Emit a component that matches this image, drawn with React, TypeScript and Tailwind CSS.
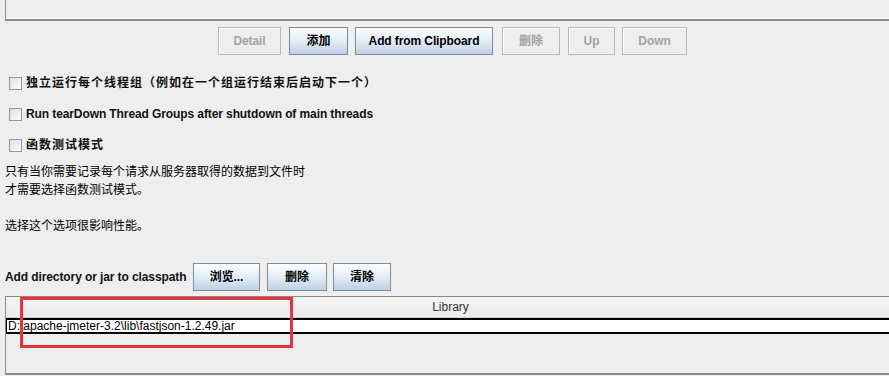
import React from 'react';

const font = 'font-["Liberation_Sans","Noto_Sans_CJK_SC",sans-serif]';

type Btn = { label: string; w: string; ml: string; disabled?: boolean };

const topButtons: Btn[] = [
  { label: 'Detail', w: 'w-[63px]', ml: 'ml-[218px]', disabled: true },
  { label: '添加', w: 'w-[59px]', ml: 'ml-[8px]' },
  { label: 'Add from Clipboard', w: 'w-[138px]', ml: 'ml-[7px]' },
  { label: '删除', w: 'w-[58px]', ml: 'ml-[9px]', disabled: true },
  { label: 'Up', w: 'w-[47px]', ml: 'ml-[8px]', disabled: true },
  { label: 'Down', w: 'w-[65px]', ml: 'ml-[7px]', disabled: true },
];

const classpathButtons: Btn[] = [
  { label: '浏览...', w: 'w-[67px]', ml: 'ml-[7px]' },
  { label: '删除', w: 'w-[60px]', ml: 'ml-[7px]' },
  { label: '清除', w: 'w-[58px]', ml: 'ml-[6px]' },
];

const SwingButton: React.FC<{ b: Btn }> = ({ b }) =>
  b.disabled ? (
    <div
      className={`${b.w} ${b.ml} flex h-[28px] items-center justify-center border border-[#b8b8b8] bg-[#eeeeee] text-[12px] font-bold tracking-[-0.1px] text-[#a3a3a3] shadow-[inset_1px_1px_0_#ffffff]`}
    >
      {b.label}
    </div>
  ) : (
    <div
      className={`${b.w} ${b.ml} flex h-[28px] items-center justify-center border border-[#7a8a99] bg-gradient-to-b from-[#fbfdff] via-[#e4edf6] to-[#bcd0e4] text-[12px] font-bold tracking-[-0.1px] text-black`}
    >
      {b.label}
    </div>
  );

const CheckRow: React.FC<{ label: string; cjk?: boolean }> = ({ label, cjk }) => (
  <div className="flex h-[22px] items-center pl-[9px]">
    <div className="h-[13px] w-[13px] border border-[#8898a8] bg-gradient-to-br from-[#d4e0ec] to-[#ffffff]" />
    <span className={`ml-[4px] text-[12px] font-bold text-[#111] ${cjk ? 'tracking-[1px]' : 'tracking-[-0.1px]'}`}>
      {label}
    </span>
  </div>
);

export default function App() {
  return (
    <div className={`relative h-[376px] w-[889px] overflow-hidden bg-[#eeeeee] ${font}`}>
      {/* top list panel edge */}
      <div className="ml-[5px] h-[21px] border-b-2 border-l border-[#8a8a8a] shadow-[0_-2px_0_#f8f8f8_inset]" />

      {/* list buttons */}
      <div className="mt-[6px] flex">
        {topButtons.map((b) => (
          <SwingButton key={b.label} b={b} />
        ))}
      </div>

      {/* options */}
      <div className="mt-[17px] flex flex-col gap-[9px]">
        <CheckRow label="独立运行每个线程组（例如在一个组运行结束后启动下一个）" cjk />
        <CheckRow label="Run tearDown Thread Groups after shutdown of main threads" />
        <CheckRow label="函数测试模式" cjk />
      </div>

      <div className="mt-[7px] pl-[5px] text-[12px] leading-[18px] text-black">
        <div>只有当你需要记录每个请求从服务器取得的数据到文件时</div>
        <div>才需要选择函数测试模式。</div>
        <div className="h-[18px]" />
        <div>选择这个选项很影响性能。</div>
      </div>

      {/* classpath */}
      <div className="mt-[28px] flex items-center pl-[5px]">
        <span className="w-[181px] whitespace-nowrap text-[12px] font-bold tracking-[-0.1px] text-[#111]">
          Add directory or jar to classpath
        </span>
        {classpathButtons.map((b) => (
          <SwingButton key={b.label} b={b} />
        ))}
      </div>

      <div className="ml-[5px] mt-[5px] flex h-[79px] flex-col border-b-2 border-l border-t border-[#8a8a8a]">
        <div className="flex h-[21px] items-center justify-center border-b border-[#d0d0d0] bg-gradient-to-b from-[#f4f4f4] to-[#ebebeb] pl-[6px] text-[12px] text-[#333]">
          Library
        </div>
        <div className="flex h-[16px] items-center border-y-2 border-l border-black bg-white pl-[1px] text-[12px] text-black">
          D:\apache-jmeter-3.2\lib\fastjson-1.2.49.jar
        </div>
      </div>

      {/* red annotation box */}
      <div className="absolute left-[20px] top-[297px] h-[51px] w-[273px] border-[3px] border-[#e3353b]" />
    </div>
  );
}
